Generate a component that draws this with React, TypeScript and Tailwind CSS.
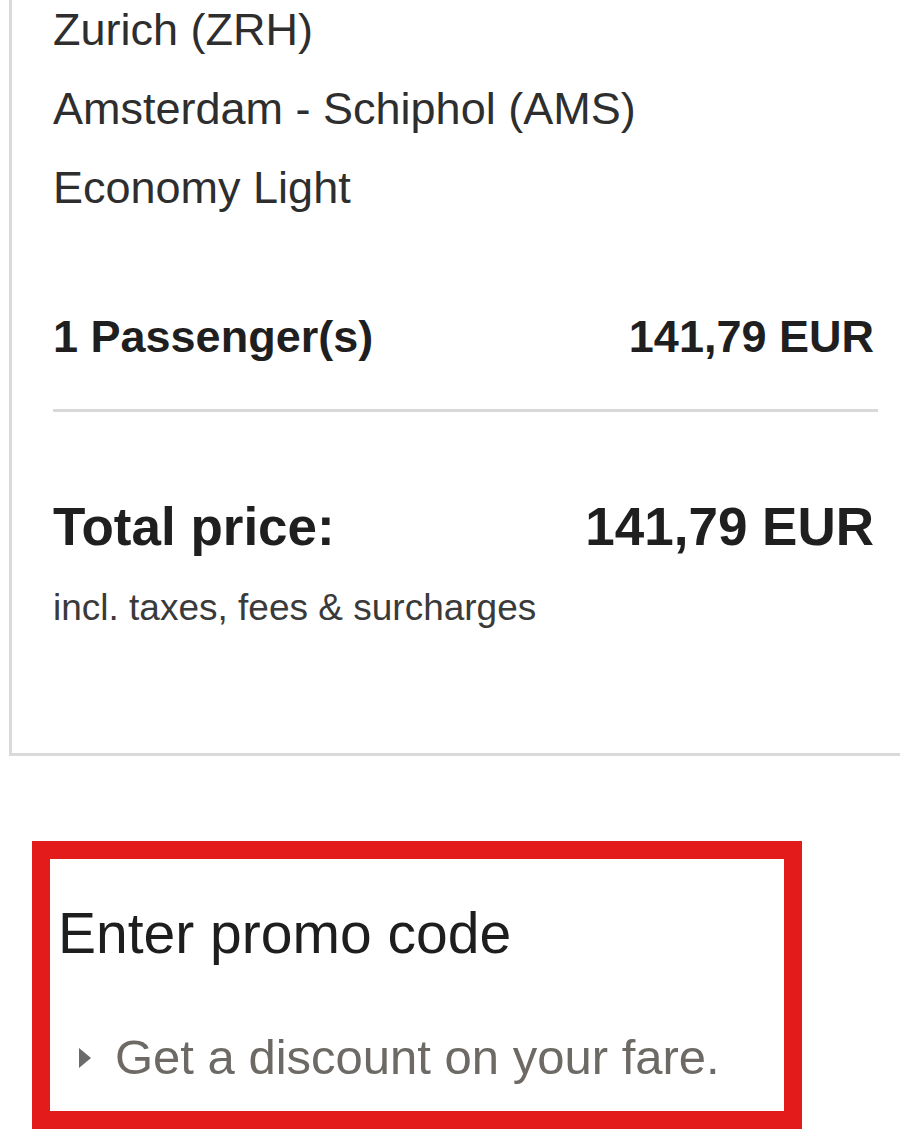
import { ReactNode } from "react";

const Row = ({ left, right, className }: { left: ReactNode; right: ReactNode; className: string }) => (
  <div className={`flex justify-between items-baseline font-bold text-[#1f1f1f] ${className}`}>
    <span>{left}</span>
    <span>{right}</span>
  </div>
);

export default function App() {
  return (
    <div className="min-h-screen bg-white font-['Liberation_Sans',Arial,sans-serif] overflow-hidden">
      {/* flight summary card (top is scrolled off) */}
      <section className="-mt-[10px] ml-[9px] border-l-[3px] border-b-[3px] border-[#dadada] pl-[41px] pr-[22px] pb-[124px]">
        <div className="text-[45px] leading-[79px] text-[#2e2e2e]">
          <p>Zurich (ZRH)</p>
          <p>Amsterdam - Schiphol (AMS)</p>
          <p>Economy Light</p>
        </div>

        <Row
          className="mt-[70px] text-[45px] leading-[79px] pr-[4px]"
          left="1 Passenger(s)"
          right="141,79 EUR"
        />

        <div className="mt-[33px] h-[3px] bg-[#d9d9d9]" />

        <Row
          className="mt-[85px] text-[53px] leading-[60px] pr-[4px]"
          left="Total price:"
          right="141,79 EUR"
        />
        <p className="mt-[30px] text-[37px] leading-[42px] text-[#3a3a3a]">
          incl. taxes, fees &amp; surcharges
        </p>
      </section>

      {/* promo code */}
      <section className="mt-[85px] ml-[32px] w-[770px] h-[288px] border-[18px] border-[#e31b1b]">
        <h2 className="pt-[41px] pl-[8px] text-[57px] leading-[66px] text-[#1e1e1e]">
          Enter promo code
        </h2>
        <button
          type="button"
          className="mt-[63px] pl-[29px] flex items-center gap-[24px] text-[49px] leading-[56px] text-[#6d6965]"
        >
          <svg width="12" height="20" viewBox="0 0 12 20" className="shrink-0 mt-[2px]">
            <path d="M0 0 L12 10 L0 20 Z" fill="#6b6b6b" />
          </svg>
          <span>Get a discount on your fare.</span>
        </button>
      </section>
    </div>
  );
}
